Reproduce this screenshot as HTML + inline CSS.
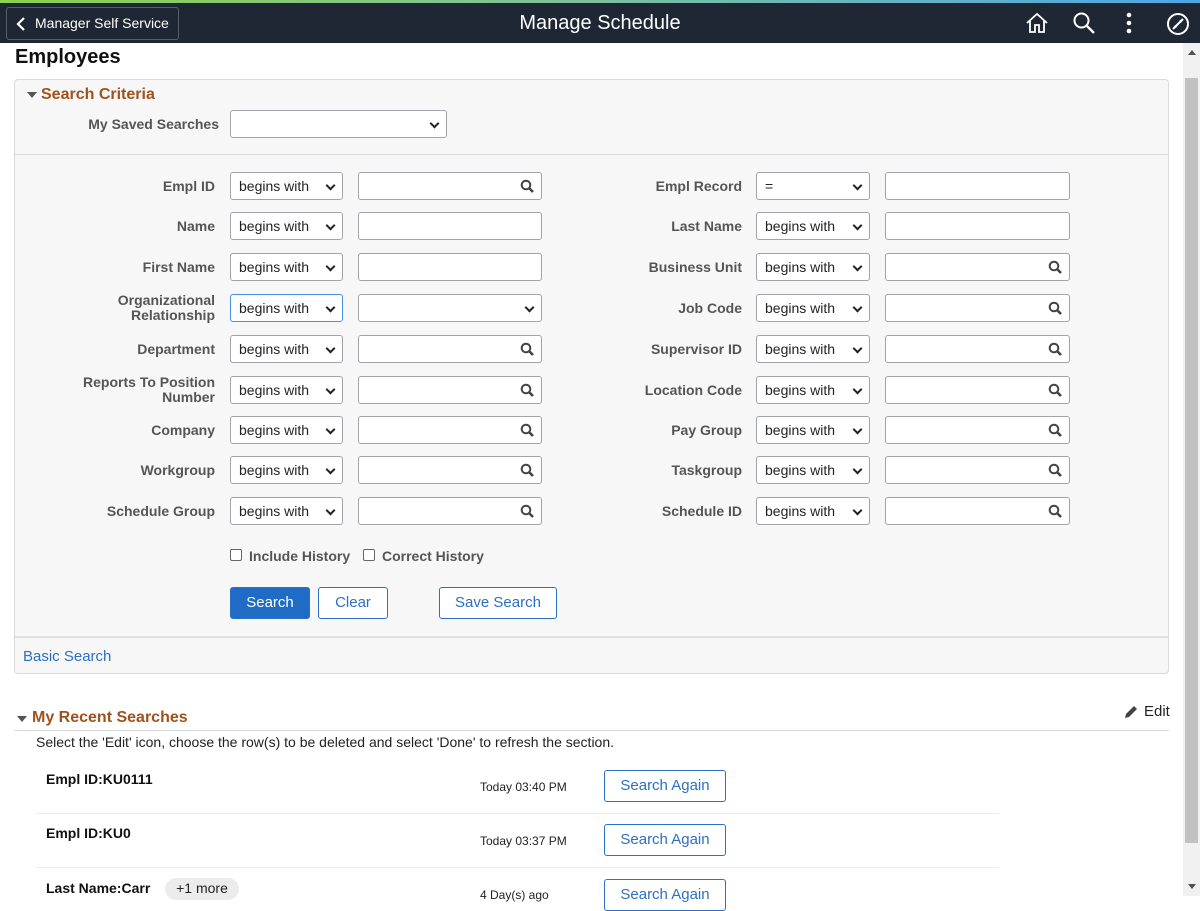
<!DOCTYPE html>
<html><head><meta charset="utf-8">
<style>
*{box-sizing:border-box;margin:0;padding:0}
body{width:1200px;height:896px;overflow:hidden;background:#fff;font-family:"Liberation Sans",Arial,sans-serif;position:relative}
.abs{position:absolute}
.hdr{left:0;top:0;width:1200px;height:43px;background:#1e2733}
.stripe{left:0;top:0;width:1200px;height:3px;background:linear-gradient(90deg,#8fd14f,#7cc0a0 50%,#4ea6e6)}
.back{left:6px;top:7px;width:173px;height:33px;border:1px solid #55606c;border-radius:3px;color:#fff;font-size:14px;line-height:31px;padding-left:28px}
.title{left:0;width:1200px;top:12px;text-align:center;color:#fff;font-size:20px}
.lbl{color:#555;font-weight:bold;font-size:14px;text-align:right;line-height:15px}
.sel{height:28px;border:1px solid #a0a4a8;border-radius:3px;background:#fff;font-size:14px;color:#222;line-height:26px;padding-left:8px}
.sel:after{content:"";position:absolute;right:8px;top:9px;width:5px;height:5px;border-right:2px solid #222;border-bottom:2px solid #222;transform:rotate(45deg)}
.inp{height:28px;border:1px solid #a0a4a8;border-radius:3px;background:#fff}
.btn{height:32px;border:1px solid #2c6fc5;border-radius:3px;background:#fff;color:#2c6fc5;font-size:15px;text-align:center;line-height:30px}
.ic{position:absolute;right:6px;top:6px}
</style></head><body>
<div class="abs hdr"></div><div class="abs stripe"></div>
<div class="abs back">Manager Self Service</div>
<svg class="abs" style="left:16px;top:16px" width="10" height="16"><path d="M8 2 L2 8 L8 14" stroke="#fff" stroke-width="2.2" fill="none"/></svg>
<div class="abs title">Manage Schedule</div>
<svg class="abs" style="left:1025px;top:12px" width="24" height="22" viewBox="0 0 24 22"><path d="M2 11 L12 2 L22 11 M5 9 V20 H10 V13 H14 V20 H19 V9" stroke="#fff" stroke-width="1.8" fill="none"/></svg>
<svg class="abs" style="left:1072px;top:11px" width="24" height="24"><circle cx="9.5" cy="9.5" r="7" stroke="#fff" stroke-width="2" fill="none"/><path d="M14.5 14.5 L22 22" stroke="#fff" stroke-width="2.4"/></svg>
<svg class="abs" style="left:1124px;top:12px" width="10" height="22"><circle cx="5" cy="3" r="2.3" fill="#fff"/><circle cx="5" cy="11" r="2.3" fill="#fff"/><circle cx="5" cy="19" r="2.3" fill="#fff"/></svg>
<svg class="abs" style="left:1166px;top:12px" width="24" height="24"><circle cx="12" cy="12" r="10" stroke="#fff" stroke-width="2" fill="none"/><path d="M17 7 L7 17" stroke="#fff" stroke-width="2"/><path d="M17 7 L13 9 L15 11Z M7 17 L11 15 L9 13Z" fill="#fff"/></svg>
<!-- scrollbar -->
<div class="abs" style="left:1183px;top:43px;width:17px;height:853px;background:#f1f1f1"></div>
<div class="abs" style="left:1185px;top:78px;width:13px;height:765px;background:#c1c1c1"></div>
<div class="abs" style="left:1188px;top:50px;width:0;height:0;border-left:4px solid transparent;border-right:4px solid transparent;border-bottom:5px solid #505050"></div>
<div class="abs" style="left:1188px;top:884px;width:0;height:0;border-left:4px solid transparent;border-right:4px solid transparent;border-top:5px solid #505050"></div>

<div class="abs" style="left:15px;top:46px;font-size:20px;font-weight:bold;color:#111">Employees</div>
<div class="abs" style="left:14px;top:79px;width:1155px;height:595px;background:#f7f7f7;border:1px solid #d8dade;border-radius:4px"></div>
<div class="abs" style="left:27px;top:92px;width:0;height:0;border-left:5px solid transparent;border-right:5px solid transparent;border-top:6px solid #555"></div>
<div class="abs" style="left:41px;top:86px;font-size:16px;font-weight:bold;color:#a0521d">Search Criteria</div>
<div class="abs lbl" style="left:40px;width:179px;top:117px">My Saved Searches</div>
<div class="abs sel" style="left:230px;top:110px;width:217px"></div>
<div class="abs" style="left:15px;top:154px;width:1153px;height:1px;background:#d8dade"></div>
<div class="abs" style="left:15px;top:636px;width:1153px;height:2px;background:#dfe1e4"></div>
<div class="abs" style="left:23px;top:648px;font-size:15px;color:#2c6fc5">Basic Search</div>

<div id="rows"></div>

<svg width="0" height="0" style="position:absolute"><defs><g id="mg"><circle cx="6" cy="6" r="4.3" stroke="#444" stroke-width="2" fill="none"/><path d="M9 9 L13 13" stroke="#444" stroke-width="2.6"/></g></defs></svg>

<!-- LEFT -->
<div class="abs lbl" style="left:40px;width:175px;top:179px">Empl ID</div>
<div class="abs sel" style="left:230px;top:172px;width:113px">begins with</div>
<div class="abs inp" style="left:358px;top:172px;width:184px"><svg class="ic" width="15" height="15"><use href="#mg"/></svg></div>
<div class="abs lbl" style="left:40px;width:175px;top:219px">Name</div>
<div class="abs sel" style="left:230px;top:212px;width:113px">begins with</div>
<div class="abs inp" style="left:358px;top:212px;width:184px"></div>
<div class="abs lbl" style="left:40px;width:175px;top:260px">First Name</div>
<div class="abs sel" style="left:230px;top:253px;width:113px">begins with</div>
<div class="abs inp" style="left:358px;top:253px;width:184px"></div>
<div class="abs lbl" style="left:40px;width:175px;top:293px">Organizational<br>Relationship</div>
<div class="abs sel" style="left:230px;top:294px;width:113px;border-color:#4a90e2">begins with</div>
<div class="abs sel" style="left:358px;top:294px;width:184px"></div>
<div class="abs lbl" style="left:40px;width:175px;top:342px">Department</div>
<div class="abs sel" style="left:230px;top:335px;width:113px">begins with</div>
<div class="abs inp" style="left:358px;top:335px;width:184px"><svg class="ic" width="15" height="15"><use href="#mg"/></svg></div>
<div class="abs lbl" style="left:40px;width:175px;top:375px">Reports To Position<br>Number</div>
<div class="abs sel" style="left:230px;top:376px;width:113px">begins with</div>
<div class="abs inp" style="left:358px;top:376px;width:184px"><svg class="ic" width="15" height="15"><use href="#mg"/></svg></div>
<div class="abs lbl" style="left:40px;width:175px;top:423px">Company</div>
<div class="abs sel" style="left:230px;top:416px;width:113px">begins with</div>
<div class="abs inp" style="left:358px;top:416px;width:184px"><svg class="ic" width="15" height="15"><use href="#mg"/></svg></div>
<div class="abs lbl" style="left:40px;width:175px;top:463px">Workgroup</div>
<div class="abs sel" style="left:230px;top:456px;width:113px">begins with</div>
<div class="abs inp" style="left:358px;top:456px;width:184px"><svg class="ic" width="15" height="15"><use href="#mg"/></svg></div>
<div class="abs lbl" style="left:40px;width:175px;top:504px">Schedule Group</div>
<div class="abs sel" style="left:230px;top:497px;width:113px">begins with</div>
<div class="abs inp" style="left:358px;top:497px;width:184px"><svg class="ic" width="15" height="15"><use href="#mg"/></svg></div>

<!-- RIGHT -->
<div class="abs lbl" style="left:560px;width:182px;top:179px">Empl Record</div>
<div class="abs sel" style="left:756px;top:172px;width:114px">=</div>
<div class="abs inp" style="left:885px;top:172px;width:185px"></div>
<div class="abs lbl" style="left:560px;width:182px;top:219px">Last Name</div>
<div class="abs sel" style="left:756px;top:212px;width:114px">begins with</div>
<div class="abs inp" style="left:885px;top:212px;width:185px"></div>
<div class="abs lbl" style="left:560px;width:182px;top:260px">Business Unit</div>
<div class="abs sel" style="left:756px;top:253px;width:114px">begins with</div>
<div class="abs inp" style="left:885px;top:253px;width:185px"><svg class="ic" width="15" height="15"><use href="#mg"/></svg></div>
<div class="abs lbl" style="left:560px;width:182px;top:301px">Job Code</div>
<div class="abs sel" style="left:756px;top:294px;width:114px">begins with</div>
<div class="abs inp" style="left:885px;top:294px;width:185px"><svg class="ic" width="15" height="15"><use href="#mg"/></svg></div>
<div class="abs lbl" style="left:560px;width:182px;top:342px">Supervisor ID</div>
<div class="abs sel" style="left:756px;top:335px;width:114px">begins with</div>
<div class="abs inp" style="left:885px;top:335px;width:185px"><svg class="ic" width="15" height="15"><use href="#mg"/></svg></div>
<div class="abs lbl" style="left:560px;width:182px;top:383px">Location Code</div>
<div class="abs sel" style="left:756px;top:376px;width:114px">begins with</div>
<div class="abs inp" style="left:885px;top:376px;width:185px"><svg class="ic" width="15" height="15"><use href="#mg"/></svg></div>
<div class="abs lbl" style="left:560px;width:182px;top:423px">Pay Group</div>
<div class="abs sel" style="left:756px;top:416px;width:114px">begins with</div>
<div class="abs inp" style="left:885px;top:416px;width:185px"><svg class="ic" width="15" height="15"><use href="#mg"/></svg></div>
<div class="abs lbl" style="left:560px;width:182px;top:463px">Taskgroup</div>
<div class="abs sel" style="left:756px;top:456px;width:114px">begins with</div>
<div class="abs inp" style="left:885px;top:456px;width:185px"><svg class="ic" width="15" height="15"><use href="#mg"/></svg></div>
<div class="abs lbl" style="left:560px;width:182px;top:504px">Schedule ID</div>
<div class="abs sel" style="left:756px;top:497px;width:114px">begins with</div>
<div class="abs inp" style="left:885px;top:497px;width:185px"><svg class="ic" width="15" height="15"><use href="#mg"/></svg></div>

<div class="abs" style="left:230px;top:549px;width:12px;height:12px;border:1px solid #666;border-radius:2px;background:#fff"></div>
<div class="abs lbl" style="left:249px;top:549px;text-align:left">Include History</div>
<div class="abs" style="left:363px;top:549px;width:12px;height:12px;border:1px solid #666;border-radius:2px;background:#fff"></div>
<div class="abs lbl" style="left:382px;top:549px;text-align:left">Correct History</div>

<div class="abs btn" style="left:230px;top:587px;width:80px;background:#1f6cc6;color:#fff">Search</div>
<div class="abs btn" style="left:318px;top:587px;width:70px">Clear</div>
<div class="abs btn" style="left:439px;top:587px;width:118px">Save Search</div>

<!-- Recent -->
<div class="abs" style="left:17px;top:716px;width:0;height:0;border-left:5px solid transparent;border-right:5px solid transparent;border-top:6px solid #555"></div>
<div class="abs" style="left:32px;top:709px;font-size:16px;font-weight:bold;color:#a0521d">My Recent Searches</div>
<svg class="abs" style="left:1123px;top:704px" width="16" height="16"><path d="M2 14 L3 10 L11 2 L14 5 L6 13Z" fill="#444"/></svg>
<div class="abs" style="left:1144px;top:703px;font-size:15px;color:#222">Edit</div>
<div class="abs" style="left:14px;top:730px;width:1155px;height:1px;background:#d8dade"></div>
<div class="abs" style="left:36px;top:734px;font-size:14px;color:#222">Select the 'Edit' icon, choose the row(s) to be deleted and select 'Done' to refresh the section.</div>

<div class="abs" style="left:46px;top:771px;font-size:14px;font-weight:bold;color:#111">Empl ID:KU0111</div>
<div class="abs" style="left:480px;top:780px;font-size:12px;color:#222">Today 03:40 PM</div>
<div class="abs btn" style="left:604px;top:770px;width:122px">Search Again</div>
<div class="abs" style="left:36px;top:813px;width:963px;height:1px;background:#ececec"></div>
<div class="abs" style="left:46px;top:825px;font-size:14px;font-weight:bold;color:#111">Empl ID:KU0</div>
<div class="abs" style="left:480px;top:834px;font-size:12px;color:#222">Today 03:37 PM</div>
<div class="abs btn" style="left:604px;top:824px;width:122px">Search Again</div>
<div class="abs" style="left:36px;top:867px;width:963px;height:1px;background:#ececec"></div>
<div class="abs" style="left:46px;top:880px;font-size:14px;font-weight:bold;color:#111">Last Name:Carr</div>
<div class="abs" style="left:165px;top:878px;width:74px;height:22px;border-radius:11px;background:#ececec;font-size:14px;color:#222;line-height:20px;text-align:center">+1 more</div>
<div class="abs" style="left:480px;top:888px;font-size:12px;color:#222">4 Day(s) ago</div>
<div class="abs btn" style="left:604px;top:879px;width:122px">Search Again</div>
</body></html>
